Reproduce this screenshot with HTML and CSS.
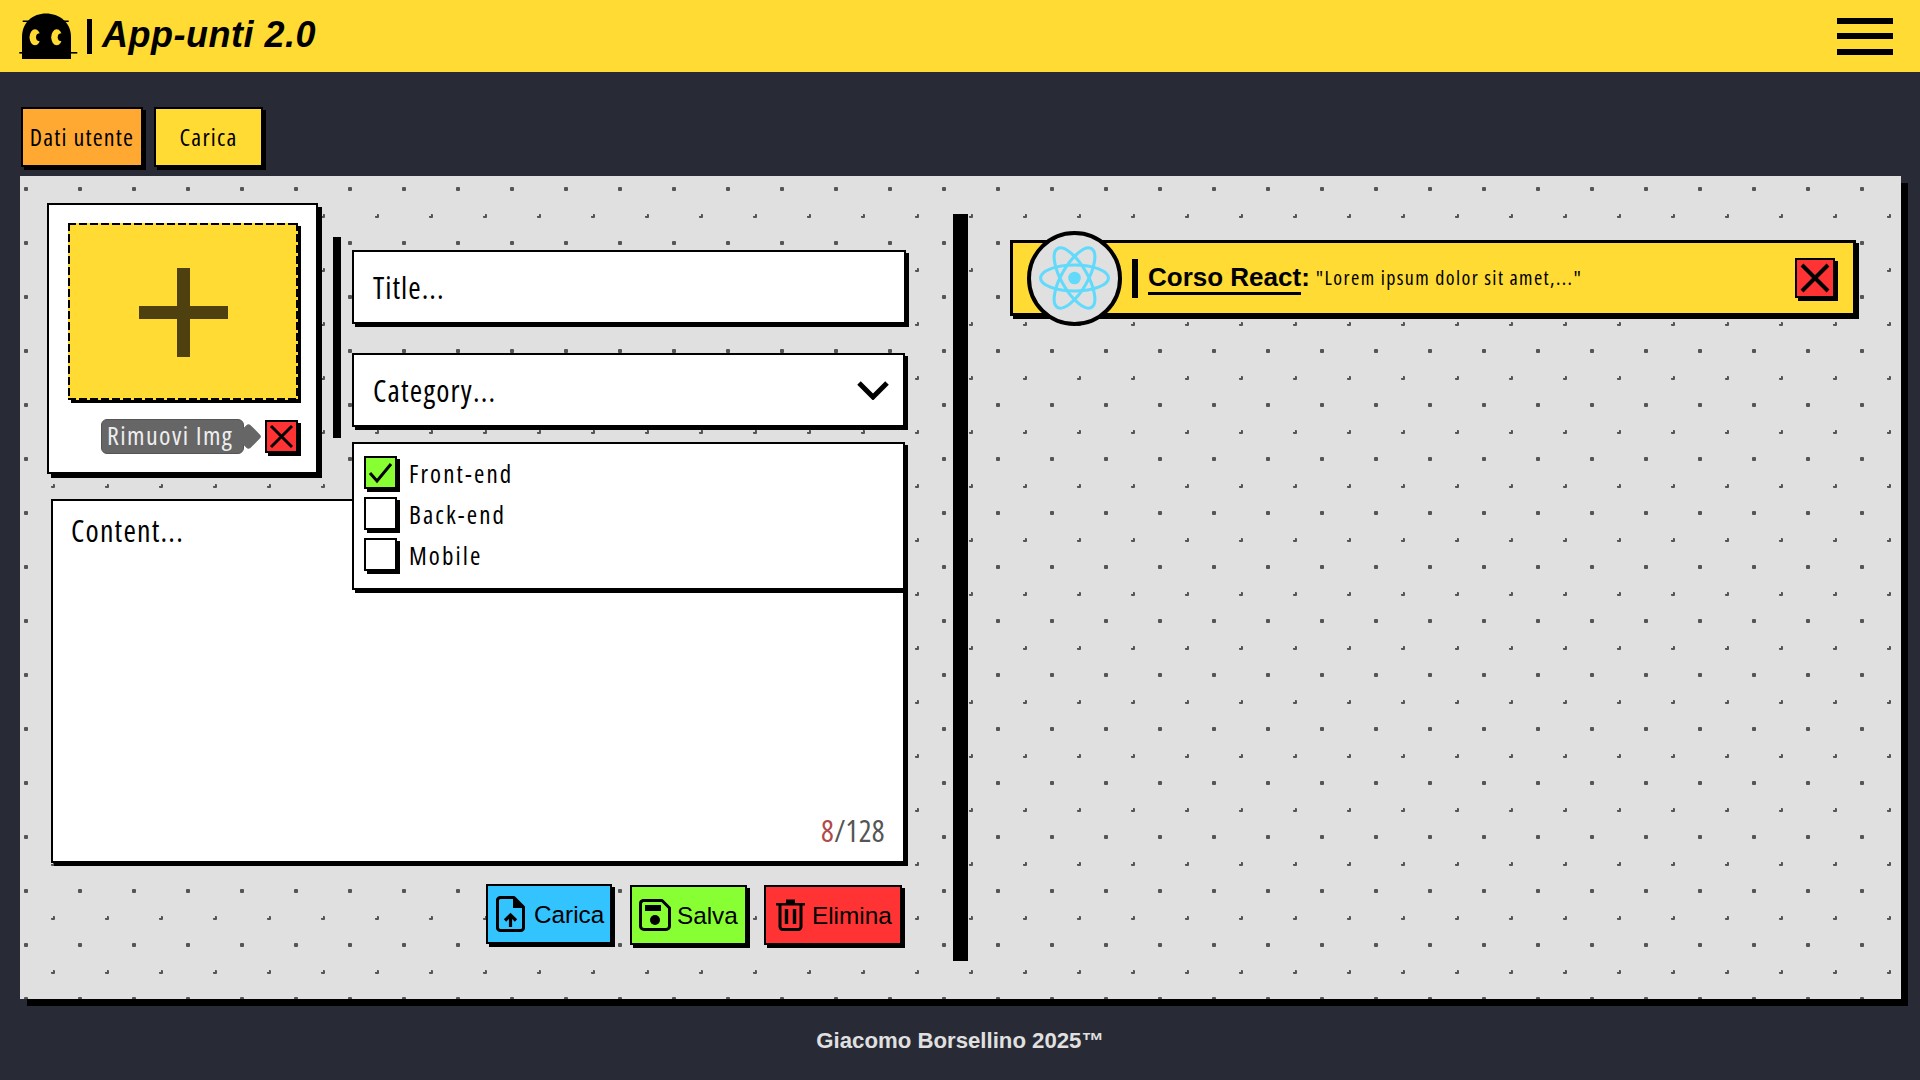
FILE: index.html
```html
<!DOCTYPE html>
<html lang="it">
<head>
<meta charset="utf-8">
<title>App-unti 2.0</title>
<link rel="stylesheet" href="styles.css">
</head>
<body>
<header class="topbar">
  <div class="brand">
    <svg class="logo" viewBox="0 0 60 50" aria-hidden="true">
      <path d="M3 47V25C3 10 14 1.5 27 1.5S52 10 52 25V47Z" fill="#000"/>
      <rect x="3.7" y="8.5" width="46" height="1.5" fill="#000"/>
      <rect x="0.3" y="40" width="58" height="1.6" fill="#000"/>
      <ellipse cx="16" cy="25.3" rx="5.500" ry="8" fill="#ffdb33"/>
      <circle cx="21" cy="25.3" r="4" fill="#000"/>
      <ellipse cx="37.7" cy="25.3" rx="5.500" ry="8" fill="#ffdb33"/>
      <circle cx="42.7" cy="25.3" r="4" fill="#000"/>
    </svg>
    <span class="brand-bar"></span>
    <h1 class="brand-name">App-unti 2.0</h1>
  </div>
  <button class="burger" aria-label="Menu"><span></span><span></span><span></span></button>
</header>

<nav class="tabs">
  <button class="tab tab-user">Dati utente</button>
  <button class="tab tab-load">Carica</button>
</nav>

<main class="panel">
  <section class="editor">
    <div class="top-row">
      <div class="image-card">
        <div class="dropzone">
          <span class="plus"></span>
        </div>
        <div class="image-actions">
          <span class="tip">Rimuovi Img</span>
          <button class="x-btn x-small" aria-label="Rimuovi">
            <svg viewBox="0 0 29 29"><path d="M4 4L25 25M25 4L4 25" stroke="#000" stroke-width="3" fill="none"/></svg>
          </button>
        </div>
      </div>
      <span class="v-bar"></span>
      <div class="fields">
        <div class="field field-title">Title...</div>
        <div class="field field-select">
          <span>Category...</span>
          <svg class="chevron" viewBox="0 0 34 20"><path d="M3 3L17 17L31 3" stroke="#000" stroke-width="5" fill="none"/></svg>
        </div>
        <div class="dropdown">
          <label class="opt">
            <span class="check checked"><svg viewBox="0 0 29 29"><path d="M4 15L11 23L25 6" stroke="#000" stroke-width="3" fill="none"/></svg></span>
            <span>Front-end</span>
          </label>
          <label class="opt"><span class="check"></span><span>Back-end</span></label>
          <label class="opt"><span class="check"></span><span>Mobile</span></label>
        </div>
      </div>
    </div>
    <div class="content-box">
      <span>Content...</span>
      <span class="counter"><span class="count-now">8</span>/128</span>
    </div>
    <div class="actions">
      <button class="act act-load">
        <svg class="ico ico-file" viewBox="0 0 29 36">
          <path d="M5 1.500H18L27.500 11V31A3 3 0 0 1 24.500 34.500H5A3 3 0 0 1 1.500 31V5A3 3 0 0 1 5 1.500Z" fill="none" stroke="#000" stroke-width="3" stroke-linejoin="round"/>
          <path d="M17 2V12H27Z" fill="#000"/>
          <path d="M14.500 31V20M9 24.500L14.500 19L20 24.500" fill="none" stroke="#000" stroke-width="3.200"/>
        </svg>
        <span>Carica</span>
      </button>
      <button class="act act-save">
        <svg class="ico ico-save" viewBox="0 0 32 32">
          <path d="M4 1.500H23L30.500 9V27A3.500 3.500 0 0 1 27 30.500H5A3.500 3.500 0 0 1 1.500 27V5A3.500 3.500 0 0 1 4 1.500Z" fill="none" stroke="#000" stroke-width="3" stroke-linejoin="round"/>
          <rect x="6" y="6" width="16" height="6" fill="#000"/>
          <circle cx="16" cy="21" r="5" fill="#000"/>
        </svg>
        <span>Salva</span>
      </button>
      <button class="act act-del">
        <svg class="ico ico-trash" viewBox="0 0 29 32">
          <path d="M0 4H29V6.500H0ZM10 0.500H19V4H10Z" fill="#000"/>
          <path d="M4 6V27A3 3 0 0 0 7 30.500H22A3 3 0 0 0 25 27V6" fill="none" stroke="#000" stroke-width="3"/>
          <path d="M10.500 10V25M18.500 10V25" stroke="#000" stroke-width="3.400" fill="none"/>
        </svg>
        <span>Elimina</span>
      </button>
    </div>
  </section>

  <span class="divider"></span>

  <section class="notes">
    <article class="note">
      <span class="avatar">
        <svg viewBox="-11.500 -10.232 23 20.463">
          <circle r="2.050" fill="#61dafb"/>
          <g fill="none" stroke="#61dafb" stroke-width="1">
            <ellipse rx="11" ry="4.200"/>
            <ellipse rx="11" ry="4.200" transform="rotate(60)"/>
            <ellipse rx="11" ry="4.200" transform="rotate(120)"/>
          </g>
        </svg>
      </span>
      <span class="note-bar"></span>
      <span class="note-title"><span class="note-name">Corso React</span>:</span>
      <span class="note-text">"Lorem ipsum dolor sit amet,..."</span>
      <button class="x-btn x-large" aria-label="Elimina nota">
        <svg viewBox="0 0 36 36"><path d="M5 5L31 31M31 5L5 31" stroke="#000" stroke-width="4" fill="none"/></svg>
      </button>
    </article>
  </section>
</main>

<footer class="foot">Giacomo Borsellino 2025™</footer>
</body>
</html>
```

FILE: styles.css
```css
* { box-sizing: border-box; }

html, body { height: 100%; }

body {
  margin: 0;
  background: #282a36;
  font-family: "Liberation Sans", Arial, sans-serif;
  overflow: hidden;
}

button {
  font: inherit;
  padding: 0;
  margin: 0;
  border: 0;
  background: none;
  color: #000;
}

/* header */
.topbar {
  height: 72px;
  background: #ffdb33;
  display: flex;
  align-items: center;
  justify-content: space-between;
  padding: 0 27px 0 19px;
}
.brand { display: flex; align-items: center; }
.logo { width: 60px; height: 50px; margin-top: 2px; flex: none; }
.brand-bar { width: 5px; height: 35px; background: #000; margin: 0 0 0 8px; }
.brand-name {
  margin: 0 0 2px 10px;
  font-size: 36px;
  font-weight: 700;
  font-style: italic;
  line-height: 1;
  letter-spacing: 0.500px;
  color: #000;
}
.burger { display: flex; flex-direction: column; gap: 9.500px; width: 56px; }
.burger span { display: block; height: 6px; background: #000; }

/* tabs */
.tabs { display: flex; gap: 11px; padding: 35px 0 9px 21px; }
.tab {
  height: 60px;
  padding-bottom: 2px;
  border: 2px solid #000;
  box-shadow: 3px 3px 0 #000;
  font-family: "Open Sans", sans-serif;
  font-stretch: 75%;
  font-size: 24px;
  letter-spacing: 1.200px;
  white-space: nowrap;
}
.tab-user { width: 122px; background: #ffa933; }
.tab-load { width: 109px; background: #ffdb33; }

/* panel */
.panel {
  height: 823px;
  margin: 0 19px 0 20px;
  box-shadow: 7px 7px 0 #000;
  display: grid;
  grid-template-columns: 933px 15px 1fr;
  background-color: #e0e0e0;
  background-image:
    radial-gradient(circle at 27px 27px, #555 0, #555 2px, transparent 2.500px),
    radial-gradient(circle at 0 0, #555 0, #555 2px, transparent 2.500px),
    radial-gradient(circle at 100% 0, #555 0, #555 2px, transparent 2.500px),
    radial-gradient(circle at 0 100%, #555 0, #555 2px, transparent 2.500px);
  background-size: 54px 54px;
  background-position: -21px -14px, 33px 40px, 33px 40px, 33px 40px;
  font-family: "Open Sans", sans-serif;
  font-stretch: 75%;
  color: #000;
}

.editor { padding: 27px 0 0 27px; }
.top-row { display: flex; height: 275px; align-items: flex-start; }

.image-card {
  width: 271px;
  height: 271px;
  background: #fff;
  border: 2px solid #000;
  box-shadow: 4px 4px 0 #000;
  padding: 18px 18px 0 19px;
  flex: none;
}
.dropzone {
  height: 177px;
  background:
    repeating-linear-gradient(90deg, #000 0, #000 8px, transparent 8px, transparent 11px) top / 100% 2px no-repeat,
    repeating-linear-gradient(90deg, #000 0, #000 8px, transparent 8px, transparent 11px) bottom / 100% 2px no-repeat,
    repeating-linear-gradient(180deg, #000 0, #000 8px, transparent 8px, transparent 11px) left / 2px 100% no-repeat,
    repeating-linear-gradient(180deg, #000 0, #000 8px, transparent 8px, transparent 11px) right / 2px 100% no-repeat,
    #ffdb33;
  box-shadow: 3px 3px 0 #000;
  display: flex;
  align-items: center;
  justify-content: center;
}
.plus { position: relative; display: block; width: 89px; height: 89px; margin-top: 2px; }
.plus::before, .plus::after { content: ""; position: absolute; background: #4f4010; }
.plus::before { left: 38px; top: 0; width: 13px; height: 89px; }
.plus::after { left: 0; top: 38px; width: 89px; height: 13px; }

.image-actions { display: flex; justify-content: flex-end; align-items: center; margin-top: 19px; }
.tip {
  position: relative;
  height: 35px;
  width: 143px;
  margin-right: 21px;
  background: #666;
  border: 1px solid #555;
  border-radius: 6px;
  color: #eee;
  font-size: 26px;
  letter-spacing: 1.400px;
  line-height: 31px;
  padding-left: 5px;
  white-space: nowrap;
}
.tip::after {
  content: "";
  position: absolute;
  right: -15px;
  top: 7px;
  width: 19px;
  height: 19px;
  background: #666;
  border-radius: 3px;
  transform: rotate(45deg);
}

.x-btn {
  display: block;
  flex: none;
  background: #ff3333;
  border: 2px solid #000;
  box-shadow: 3px 3px 0 #000;
}
.x-btn svg { display: block; width: 100%; height: 100%; }
.x-small { width: 33px; height: 33px; }
.x-large { width: 40px; height: 40px; margin-left: auto; }

.v-bar { width: 8px; height: 201px; background: #000; margin: 34px 0 0 15px; flex: none; }

.fields { position: relative; width: 554px; margin: 47px 0 0 11px; }
.field {
  height: 74px;
  background: #fff;
  border: 2px solid #000;
  box-shadow: 3px 3px 0 #000;
  padding-left: 19px;
  font-size: 30px;
  letter-spacing: 1px;
  display: flex;
  align-items: center;
}
.field-select { width: 553px; margin-top: 29px; justify-content: space-between; padding-right: 13px; letter-spacing: 1.200px; }
.chevron { width: 34px; height: 20px; }

.dropdown {
  position: absolute;
  left: 0;
  top: 192px;
  width: 553px;
  height: 148px;
  background: #fff;
  border: 2px solid #000;
  box-shadow: 3px 3px 0 #000;
  padding: 12px 0 0 10px;
  z-index: 2;
}
.opt { display: flex; align-items: center; gap: 12px; height: 33px; margin-bottom: 8px; font-size: 25px; letter-spacing: 2.100px; }
.check {
  width: 33px;
  height: 33px;
  flex: none;
  border: 2px solid #000;
  box-shadow: 3px 3px 0 #000;
  background: #fff;
}
.check svg { display: block; width: 100%; height: 100%; }
.checked { background: #88ff33; }

.content-box {
  position: relative;
  width: 854px;
  height: 364px;
  margin: 21px 0 0 4px;
  background: #fff;
  border: 2px solid #000;
  box-shadow: 3px 3px 0 #000;
  padding: 9px 18px;
  font-size: 30px;
  letter-spacing: 1.200px;
}
.counter { position: absolute; right: 18px; bottom: 10px; color: #555; font-size: 30px; letter-spacing: 0.400px; }
.count-now { color: #b04a4a; }

.actions { display: flex; align-items: flex-start; margin: 21px 0 0 439px; }
.act {
  height: 60px;
  border: 2px solid #000;
  box-shadow: 3px 3px 0 #000;
  display: flex;
  align-items: center;
  font-family: "Liberation Sans", Arial, sans-serif;
  font-stretch: normal;
  font-size: 24.300px;
}
.act span { position: relative; top: 1px; }
.act-load { width: 126px; background: #33c3ff; padding-left: 8px; gap: 9px; }
.act-save { width: 117px; background: #88ff33; padding-left: 7px; gap: 6px; margin: 1px 0 0 18px; }
.act-del { width: 138px; background: #ff3333; padding-left: 10px; gap: 7px; margin: 1px 0 0 17px; }
.ico { display: block; flex: none; }
.ico-file { width: 29px; height: 36px; }
.ico-save { width: 32px; height: 32px; }
.ico-trash { width: 29px; height: 32px; }

.divider { display: block; background: #000; height: 747px; margin-top: 38px; }

.notes { padding: 64px 45px 0 42px; }
.note {
  height: 76px;
  background: #ffdb33;
  border: 3px solid #000;
  box-shadow: 3px 3px 0 #000;
  display: flex;
  align-items: center;
  padding: 0 18px 0 14px;
}
.avatar {
  width: 95px;
  height: 95px;
  margin: -12px 0;
  flex: none;
  border: 4px solid #000;
  border-radius: 50%;
  background: #e0e0e0;
  display: flex;
  align-items: center;
  justify-content: center;
}
.avatar svg { width: 71px; height: 64px; display: block; }
.note-bar { width: 6px; height: 39px; background: #000; margin: 0 10px; flex: none; }
.note-title { font-family: "Liberation Sans", Arial, sans-serif; font-stretch: normal; font-weight: 700; font-size: 26px; margin-bottom: 1px; }
.note-name { border-bottom: 3px solid #000; }
.note-text { font-size: 20px; letter-spacing: 1.400px; margin: 0 0 2px 6px; }

/* footer */
.foot {
  height: 81px;
  padding-top: 2px;
  display: flex;
  align-items: center;
  justify-content: center;
  color: #e0e0e0;
  font-size: 22.200px;
  font-weight: 700;
}
```
